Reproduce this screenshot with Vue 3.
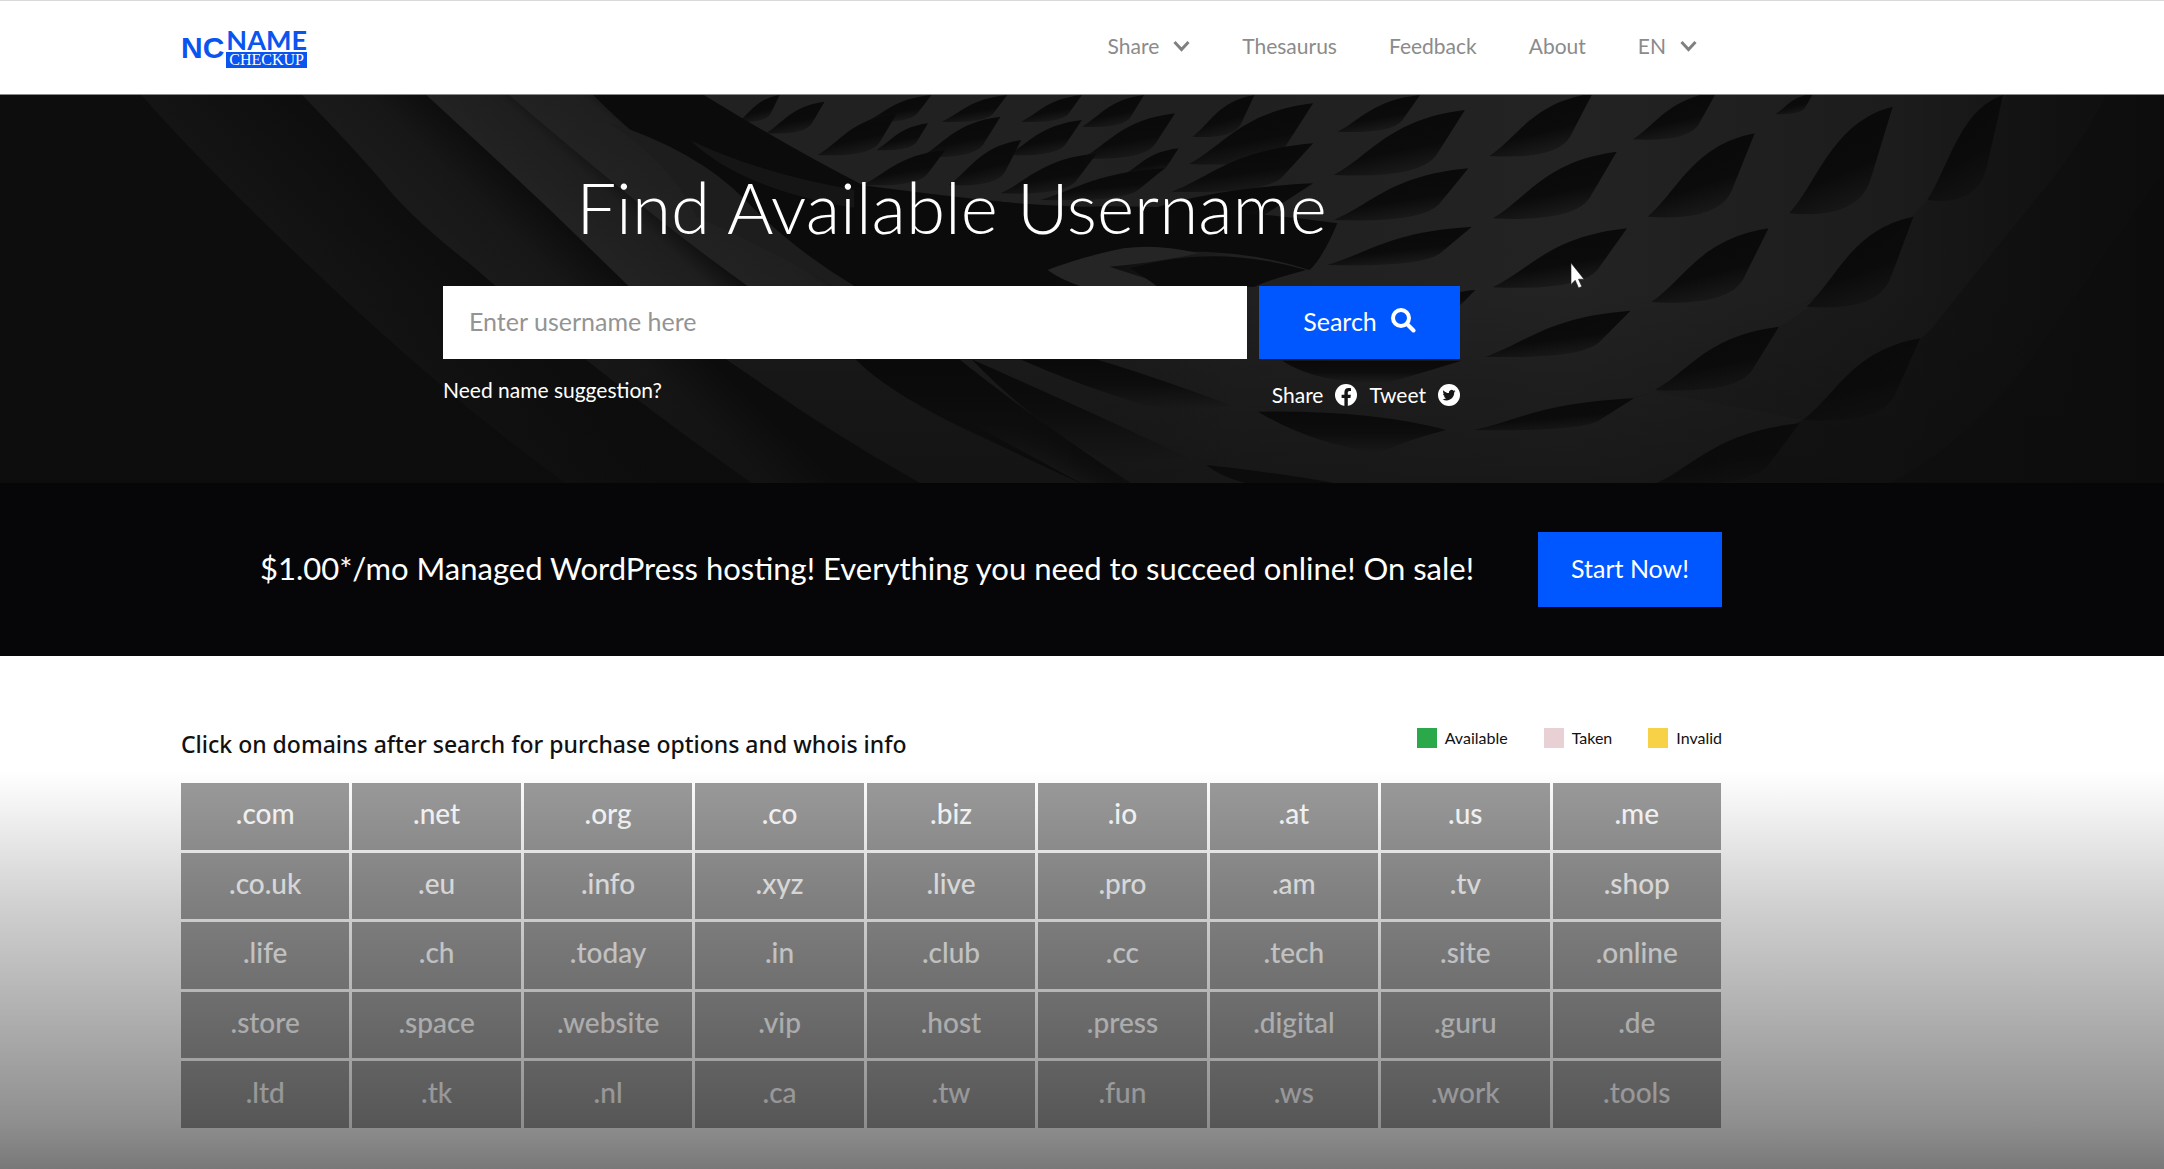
<script setup>
import { ref } from 'vue'

const username = ref('')

const domains = [
  '.com', '.net', '.org', '.co', '.biz', '.io', '.at', '.us', '.me',
  '.co.uk', '.eu', '.info', '.xyz', '.live', '.pro', '.am', '.tv', '.shop',
  '.life', '.ch', '.today', '.in', '.club', '.cc', '.tech', '.site', '.online',
  '.store', '.space', '.website', '.vip', '.host', '.press', '.digital', '.guru', '.de',
  '.ltd', '.tk', '.nl', '.ca', '.tw', '.fun', '.ws', '.work', '.tools',
]

const legend = [
  { label: 'Available', kind: 'available' },
  { label: 'Taken', kind: 'taken' },
  { label: 'Invalid', kind: 'invalid' },
]

// Folded-paper relief: each fold runs from its lower-left tip to its upper-right tip.
const innerFolds = [
  [1070, 95, 1130, 15], [1110, 130, 1195, 35], [1185, 195, 1300, 70], [1255, 95, 1350, 15],
  [1365, 95, 1460, 15], [1270, 180, 1345, 100], [1335, 200, 1450, 80], [1250, 285, 1370, 180],
  [1375, 285, 1480, 150], [1480, 95, 1568, 15], [1460, 195, 1568, 90], [1450, 310, 1590, 190],
]
const outerFolds = [
  [0, 110, 90, 15], [0, 205, 135, 70], [60, 255, 140, 175], [-60, 330, 120, 235],
  [160, 140, 250, 15], [370, 125, 490, 15], [590, 198, 740, 10], [798, 148, 920, 5], [1005, 72, 1060, 10],
  [155, 222, 335, 40], [365, 255, 555, 60], [595, 385, 775, 185], [820, 380, 975, 130],
  [1025, 370, 1175, 50], [1225, 330, 1335, 15],
  [130, 305, 335, 160], [-20, 430, 335, 280], [365, 390, 560, 235], [595, 592, 790, 415], [825, 636, 995, 415],
  [1050, 650, 1205, 380], [355, 525, 565, 410], [480, 660, 570, 600], [585, 800, 795, 662],
  [830, 900, 1010, 710], [1045, 990, 1215, 745], [568, 1020, 800, 925], [830, 1182, 1040, 1000],
]

function fold([x1, y1, x2, y2]) {
  const dx = x2 - x1
  const dy = y2 - y1
  return `M${x1} ${y1}C${x1 + 0.28 * dx} ${y1 + 0.3 * dy} ${x1 + 0.42 * dx} ${y1 + 0.86 * dy} ${x2} ${y2}` +
    `L${x2 - 0.22 * dx} ${y1 + 0.3 * dy}Q${x2 - 0.35 * dx} ${y1 - 0.06 * dy} ${x1} ${y1}Z`
}
</script>

<template>
  <div class="page">
    <header class="topbar">
      <div class="wrap topbar-row">
        <a class="logo" href="#" aria-label="Name Checkup">
          <span class="logo-mark">NC</span>
          <span class="logo-words">
            <span class="logo-name">NAME</span>
            <span class="logo-check">CHECKUP</span>
          </span>
        </a>
        <nav class="nav">
          <button type="button" class="nav-item">
            Share
            <svg class="chevron" viewBox="0 0 17 12" aria-hidden="true"><path d="M1.500 2l7 7.500L15.500 2" /></svg>
          </button>
          <a class="nav-item" href="#">Thesaurus</a>
          <a class="nav-item" href="#">Feedback</a>
          <a class="nav-item" href="#">About</a>
          <button type="button" class="nav-item">
            EN
            <svg class="chevron" viewBox="0 0 17 12" aria-hidden="true"><path d="M1.500 2l7 7.500L15.500 2" /></svg>
          </button>
        </nav>
      </div>
    </header>

    <section class="hero">
      <svg class="relief" viewBox="0 0 2164 388" preserveAspectRatio="none" aria-hidden="true">
        <defs>
          <linearGradient id="bandA" gradientUnits="userSpaceOnUse" x1="250" y1="100" x2="450" y2="10"><stop offset="0" stop-color="#141414" /><stop offset="1" stop-color="#0d0d0d" /></linearGradient>
          <linearGradient id="bandB" gradientUnits="userSpaceOnUse" x1="480" y1="110" x2="640" y2="30"><stop offset="0" stop-color="#1a1a1a" /><stop offset=".5" stop-color="#171717" /><stop offset="1" stop-color="#0c0c0c" /></linearGradient>
          <linearGradient id="bandC" gradientUnits="userSpaceOnUse" x1="670" y1="110" x2="800" y2="40"><stop offset="0" stop-color="#222" /><stop offset=".6" stop-color="#1e1e1e" /><stop offset="1" stop-color="#0b0b0b" /></linearGradient>
          <linearGradient id="bandD" gradientUnits="userSpaceOnUse" x1="790" y1="110" x2="920" y2="30"><stop offset="0" stop-color="#222" /><stop offset=".6" stop-color="#1f1f1f" /><stop offset="1" stop-color="#0b0b0b" /></linearGradient>
          <linearGradient id="sheet" x1="0" y1="0" x2="1" y2="0"><stop offset="0" stop-color="#1e1e1e" stop-opacity="0" /><stop offset=".14" stop-color="#202020" /><stop offset=".45" stop-color="#232323" /><stop offset=".75" stop-color="#1c1c1c" /><stop offset="1" stop-color="#0e0e0e" /></linearGradient>
          <linearGradient id="low" x1="0" y1="0" x2="0" y2="1"><stop offset=".5" stop-color="#0c0c0c" stop-opacity="0" /><stop offset="1" stop-color="#0c0c0c" stop-opacity=".45" /></linearGradient>
          <linearGradient id="edge" x1="0" y1="0" x2="1" y2="0"><stop offset="0" stop-color="#0c0c0c" stop-opacity=".15" /><stop offset="1" stop-color="#0c0c0c" stop-opacity=".75" /></linearGradient>
          <linearGradient id="foldFill" x1=".3" y1="0" x2=".7" y2="1"><stop offset="0" stop-color="#090909" /><stop offset=".6" stop-color="#0b0b0b" /><stop offset="1" stop-color="#0c0c0c" stop-opacity=".15" /></linearGradient>
          <linearGradient id="droop" x1="0" y1="0" x2="0" y2="1"><stop offset="0" stop-color="#090909" /><stop offset=".5" stop-color="#0d0d0d" /><stop offset="1" stop-color="#0d0d0d" stop-opacity="0" /></linearGradient>
        </defs>
        <rect width="2164" height="388" fill="#0d0d0d" />
        <g transform="scale(.69 .33333) translate(0 -15)">
          <path fill="url(#bandA)" d="M205 15Q300 240 480 590T820 1180H1100L600 15Z" />
          <path fill="url(#bandB)" d="M438 15Q520 190 560 290T680 520Q870 860 1090 1180H1340L700 15Z" />
          <path fill="url(#bandC)" d="M618 15L720 210L800 365L912 590Q1060 840 1335 1180H1568L840 15Z" />
          <path fill="url(#bandD)" d="M738 15Q830 180 920 330T1085 590Q1250 830 1568 1180H1840V800L1330 590L980 220L900 15Z" />
          <path fill="#0b0b0b" d="M860 15H1020Q1080 100 1240 240T1568 380H1840V590H1240Q1080 420 985 250T860 15Z" />
          <path fill="#1d1d1d" d="M880 95Q1010 180 1080 330T1240 590H1210Q1110 470 1010 380Q970 210 880 95Z" />
          <path fill="#151515" d="M1000 150Q1100 250 1240 300T1568 400Q1300 390 1180 330T1000 150Z" />
          <path fill="#1a1a1a" d="M1055 808Q1180 1000 1335 1181H1568Q1350 980 1240 808Z" />
          <path fill="url(#droop)" d="M1240 808Q1310 960 1568 1170L1700 1181Q1500 930 1390 808Z" />
          <path fill="#1d1d1d" d="M1390 808H1860V1181H1640Q1500 990 1390 808Z" />
          <path fill="#212121" d="M1020 15H1860V420Q1400 330 1250 285Q1150 180 1020 15Z" />
          <path v-for="(f, i) in innerFolds" :key="i" :d="fold(f)" fill="url(#foldFill)" />
        </g>
        <g transform="translate(1082 0) scale(.69 .33333) translate(0 -15)">
          <rect y="15" width="1568" height="1166" fill="url(#sheet)" />
          <path fill="#0b0b0b" d="M-330 285Q-150 340 0 350Q150 340 370 400Q350 500 330 540Q180 440 0 520L-60 590H-330Z" />
          <path fill="#252525" d="M-50 540Q0 500 60 475Q110 460 170 490Q100 520 40 530L130 590H0Q-30 570 -50 540Z" />
          <path fill="#0b0b0b" d="M70 535Q190 460 325 540Q270 570 250 590H110Q90 560 70 535Z" />
          <path fill="url(#droop)" d="M290 812H550Q490 850 440 880Q340 880 290 812Z" />
          <path fill="url(#droop)" d="M-90 808H20Q90 850 215 945Q150 970 90 945Q0 890 -90 808Z" />
          <path fill="url(#droop)" d="M-160 808Q50 1000 155 1105Q60 1130 0 1080Q-90 960 -160 808Z" />
          <path fill="url(#droop)" d="M255 965Q420 960 528 1020Q470 1050 430 1090Q330 1060 255 965Z" />
          <path fill="#0c0c0c" d="M180 1125Q290 1150 370 1181H240Q200 1160 180 1125Z" />
          <path v-for="(f, i) in outerFolds" :key="i" :d="fold(f)" fill="url(#foldFill)" />
          <path fill="url(#edge)" d="M1340 15Q1290 180 1225 330T1040 650Q1120 560 1010 712Q930 850 830 905T568 1025Q760 960 830 905L1045 990Q930 1100 830 1181H1568V15Z" opacity=".4" />
          <path fill="#0c0c0c" opacity=".4" d="M1485 15Q1450 160 1390 310T1230 720Q1130 900 1045 990T830 1181H1568V15Z" />
          <path fill="#0c0c0c" opacity=".4" d="M1568 250Q1500 440 1400 740T1170 1181H1568Z" />
        </g>
        <rect width="2164" height="388" fill="url(#low)" />
      </svg>

      <div class="wrap hero-body">
        <h1 class="title">Find Available Username</h1>
        <form class="search" @submit.prevent>
          <input v-model="username" class="search-input" type="text" placeholder="Enter username here" aria-label="Username" />
          <button class="search-button" type="submit">
            Search
            <svg class="magnifier" viewBox="0 0 25 25" aria-hidden="true"><circle cx="10" cy="10" r="8" /><path d="M16 16l6.500 6.500" /></svg>
          </button>
        </form>
        <div class="under">
          <a href="#" class="suggest">Need name suggestion?</a>
          <div class="social">
            <a href="#">Share
              <svg viewBox="0 0 22 22" aria-hidden="true"><circle cx="11" cy="11" r="11" fill="#fff" /><path fill="#161616" d="M9.400 22v-8.100H6.600v-3.200h2.800V8.300c0-2.800 1.600-4.300 4.100-4.300 1.200 0 2.500.2 2.500.2v2.700h-1.400c-1.400 0-1.800.9-1.800 1.700v2.100h3.100l-.5 3.200h-2.600V22z" /></svg>
            </a>
            <a href="#">Tweet
              <svg viewBox="0 0 22 22" aria-hidden="true"><circle cx="11" cy="11" r="11" fill="#fff" /><path fill="#161616" d="M17.500 7.100c-.5.200-1 .4-1.500.4.500-.3 1-.9 1.200-1.500-.5.300-1.100.5-1.700.7a2.700 2.700 0 0 0-4.600 2.400C8.700 9 6.700 7.900 5.400 6.200c-.7 1.200-.4 2.800.8 3.600-.4 0-.8-.1-1.200-.3 0 1.300.9 2.400 2.100 2.700-.4.100-.8.100-1.200 0 .3 1.100 1.300 1.900 2.500 1.900-1.100.9-2.500 1.300-3.900 1.100 4.900 3 11.700.1 11.700-6.600.5-.4.900-.9 1.300-1.500z" /></svg>
            </a>
          </div>
        </div>
      </div>

      <svg class="cursor" viewBox="0 0 15 27" aria-hidden="true"><path fill="#fff" stroke="#222" stroke-width=".6" d="M1 1v21.500l4.200-4.200 3.400 7.700 3.200-1.500-3.300-7.300H14z" /></svg>
    </section>

    <section class="promo">
      <div class="wrap promo-row">
        <p>$1.00*/mo Managed WordPress hosting! Everything you need to succeed online! On sale!</p>
        <button type="button" class="start">Start Now!</button>
      </div>
    </section>

    <main class="results">
      <div class="wrap">
        <div class="results-head">
          <h2>Click on domains after search for purchase options and whois info</h2>
          <ul class="legend">
            <li v-for="item in legend" :key="item.kind"><i :class="item.kind"></i>{{ item.label }}</li>
          </ul>
        </div>
        <div class="grid">
          <button v-for="name in domains" :key="name" type="button" class="cell">{{ name }}</button>
        </div>
      </div>
      <div class="shade"></div>
    </main>
  </div>
</template>

<style>
body {
  margin: 0;
  background: #fff;
}
</style>

<style scoped>
.page {
  min-height: 100vh;
  display: flex;
  flex-direction: column;
  font-family: Lato, "Open Sans", sans-serif;
  color: #fff;
  overflow: hidden;
}
.page * {
  box-sizing: border-box;
}
a {
  color: inherit;
  text-decoration: none;
}
button {
  font: inherit;
  color: inherit;
  border: 0;
  padding: 0;
  background: none;
}
.wrap {
  max-width: 1541px;
  margin-left: 181px;
}
.topbar {
  height: 95px;
  background: #fff;
  border-top: 1px solid #d9d9d9;
  border-bottom: 1px solid #8a8a8a;
}
.topbar-row {
  display: flex;
  justify-content: space-between;
  align-items: center;
  height: 93px;
}
.logo {
  display: flex;
  gap: 2px;
  color: #0a54f0;
}
.logo-mark {
  font: bold 30px/40px "Liberation Sans", sans-serif;
}
.logo-words {
  display: flex;
  flex-direction: column;
}
.logo-name {
  font-weight: 700;
  font-size: 27px;
  line-height: 24px;
}
.logo-check {
  background: #0a54f0;
  color: #fff;
  font: 16px/16px "Liberation Serif", serif;
  text-align: center;
}
.nav {
  display: flex;
  align-items: center;
  gap: 52px;
  padding: 0 25px 4px 0;
  font-size: 21px;
  line-height: 24px;
  color: #8b8b8b;
}
.nav-item {
  display: flex;
  align-items: center;
  gap: 14px;
}
.chevron {
  width: 17px;
  height: 12px;
  fill: none;
  stroke: #808080;
  stroke-width: 3;
}
.hero {
  position: relative;
  height: 388px;
  background: #0d0d0d;
}
.relief {
  position: absolute;
  inset: 0;
  width: 100%;
  height: 100%;
}
.hero-body {
  position: relative;
  display: flex;
  flex-direction: column;
  align-items: center;
  padding-top: 70px;
}
.title {
  margin: 0;
  font-weight: 300;
  font-size: 71px;
  line-height: 84px;
}
.search {
  display: flex;
  gap: 12px;
  width: 1017px;
  margin-top: 37px;
}
.search-input {
  flex: 1;
  min-width: 0;
  height: 73px;
  padding: 0 26px 4px;
  border: 0;
  border-radius: 0;
  background: #fff;
  font: 25px Lato, sans-serif;
  color: #222;
}
.search-input::placeholder {
  color: #949494;
  opacity: 1;
}
.search-button {
  display: flex;
  align-items: center;
  justify-content: center;
  gap: 14px;
  width: 201px;
  padding-bottom: 4px;
  background: #0057ff;
  font-size: 25px;
}
.magnifier {
  width: 25px;
  height: 25px;
  fill: none;
  stroke: #fff;
  stroke-width: 4;
  stroke-linecap: round;
}
.under {
  display: flex;
  justify-content: space-between;
  width: 1017px;
  padding-top: 19px;
  font-size: 21px;
  line-height: 24px;
}
.social {
  display: flex;
  gap: 12px;
  padding-top: 5px;
}
.social a {
  display: flex;
  align-items: center;
  gap: 12px;
}
.social svg {
  width: 22px;
  height: 22px;
}
.cursor {
  position: absolute;
  left: 1570px;
  top: 167px;
  width: 15px;
  height: 27px;
}
.promo {
  height: 173px;
  background: #060608;
}
.promo-row {
  display: flex;
  align-items: center;
  justify-content: flex-end;
  gap: 64px;
  height: 173px;
}
.promo p {
  margin: 0;
  padding-bottom: 4px;
  font-size: 31px;
  line-height: 36px;
}
.start {
  width: 184px;
  height: 75px;
  padding-bottom: 4px;
  background: #0057ff;
  font-size: 25px;
}
.results {
  position: relative;
  flex: 1;
  padding: 70px 0 40px;
  background: #fff;
}
.results-head {
  display: flex;
  justify-content: space-between;
  align-items: flex-start;
  color: #111;
}
.results h2 {
  margin: 0;
  font: 500 23px/36px "Noto Sans", sans-serif;
}
.legend {
  display: flex;
  gap: 36px;
  margin: 0;
  padding: 0;
  list-style: none;
  font-size: 16px;
  line-height: 24px;
}
.legend li {
  display: flex;
  align-items: center;
  gap: 8px;
}
.legend i {
  width: 20px;
  height: 20px;
}
.available {
  background: #2ba84a;
}
.taken {
  background: #e8d0d4;
}
.invalid {
  background: #f7d247;
}
.grid {
  display: grid;
  grid-template-columns: repeat(9, 1fr);
  grid-template-rows: repeat(5, 1fr);
  gap: 3px;
  height: 345px;
  margin: 21px 1px 0 0;
}
.cell {
  background: #9b9b9b;
  font-weight: 500;
  font-size: 28px;
  padding-bottom: 6px;
}
.shade {
  position: absolute;
  inset: 114px 0 0;
  pointer-events: none;
  background: linear-gradient(rgba(0, 0, 0, 0), rgba(0, 0, 0, 0.03) 6%, rgba(0, 1, 3, 0.18) 33%, rgba(0, 1, 3, 0.44) 88%, rgba(0, 1, 3, 0.53));
}
</style>
